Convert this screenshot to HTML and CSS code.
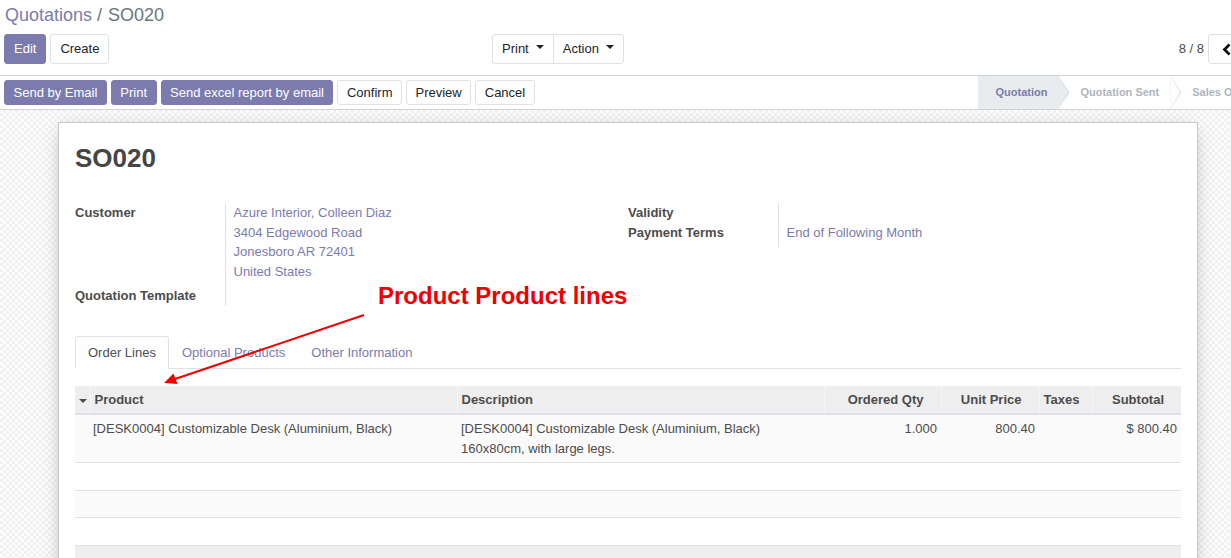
FILE: index.html
```html
<!DOCTYPE html>
<html lang="en">
<head>
<meta charset="utf-8">
<title>Quotations / SO020</title>
<link rel="stylesheet" href="styles.css">
</head>
<body>
<div class="app">
  <header class="cp">
    <ol class="breadcrumb">
      <li class="crumb-link">Quotations</li>
      <li class="crumb-sep">/</li>
      <li class="crumb-active">SO020</li>
    </ol>
    <div class="cp-row">
      <div class="cp-left">
        <button class="btn btn-primary">Edit</button>
        <button class="btn btn-secondary">Create</button>
      </div>
      <div class="cp-right">
        <div class="btn-group">
          <button class="btn btn-secondary">Print<span class="caret"></span></button>
          <button class="btn btn-secondary">Action<span class="caret"></span></button>
        </div>
        <div class="pager">
          <span class="pager-value">8 / 8</span>
          <div class="btn-group">
            <button class="btn btn-secondary pager-btn"><svg width="9" height="13" viewBox="0 0 9 13"><polyline points="7.5,1.5 2.5,6.5 7.5,11.5" fill="none" stroke="#111" stroke-width="2.8"/></svg></button>
            <button class="btn btn-secondary pager-btn"><svg width="9" height="13" viewBox="0 0 9 13"><polyline points="1.5,1.5 6.5,6.5 1.5,11.5" fill="none" stroke="#111" stroke-width="2.8"/></svg></button>
          </div>
        </div>
      </div>
    </div>
  </header>

  <div class="statusbar">
    <div class="sb-buttons">
      <button class="btn btn-sm btn-primary">Send by Email</button>
      <button class="btn btn-sm btn-primary">Print</button>
      <button class="btn btn-sm btn-primary">Send excel report by email</button>
      <button class="btn btn-sm btn-secondary">Confirm</button>
      <button class="btn btn-sm btn-secondary">Preview</button>
      <button class="btn btn-sm btn-secondary">Cancel</button>
    </div>
    <div class="sb-states">
      <span class="state active">Quotation</span>
      <span class="state">Quotation Sent</span>
      <span class="state">Sales Order</span>
    </div>
  </div>

  <main class="content">
    <div class="sheet">
      <h1 class="title">SO020</h1>

      <div class="groups">
        <table class="group">
          <tr class="pad">
            <td class="f-label">Customer</td>
            <td class="f-value">Azure Interior, Colleen Diaz<br>3404 Edgewood Road<br>Jonesboro AR 72401<br>United States</td>
          </tr>
          <tr>
            <td class="f-label">Quotation Template</td>
            <td class="f-value"></td>
          </tr>
        </table>
        <table class="group">
          <tr>
            <td class="f-label">Validity</td>
            <td class="f-value"></td>
          </tr>
          <tr class="pad">
            <td class="f-label">Payment Terms</td>
            <td class="f-value">End of Following Month</td>
          </tr>
        </table>
      </div>

      <ul class="tabs">
        <li class="tab active">Order Lines</li>
        <li class="tab">Optional Products</li>
        <li class="tab">Other Information</li>
      </ul>

      <table class="lines">
        <colgroup>
          <col style="width:15px">
          <col style="width:367px">
          <col style="width:367px">
          <col style="width:117px">
          <col style="width:98px">
          <col style="width:53px">
          <col style="width:89px">
        </colgroup>
        <thead>
          <tr>
            <th class="handle"><span class="caret"></span></th>
            <th>Product</th>
            <th>Description</th>
            <th class="num">Ordered Qty</th>
            <th class="num">Unit Price</th>
            <th>Taxes</th>
            <th class="num">Subtotal</th>
          </tr>
        </thead>
        <tbody>
          <tr class="odd">
            <td></td>
            <td class="prod">[DESK0004] Customizable Desk (Aluminium, Black)</td>
            <td>[DESK0004] Customizable Desk (Aluminium, Black)<br>160x80cm, with large legs.</td>
            <td class="num">1.000</td>
            <td class="num">800.40</td>
            <td></td>
            <td class="num">$ 800.40</td>
          </tr>
          <tr class="empty"><td colspan="7">&nbsp;</td></tr>
          <tr class="empty odd"><td colspan="7">&nbsp;</td></tr>
          <tr class="empty"><td colspan="7">&nbsp;</td></tr>
        </tbody>
        <tfoot>
          <tr><td colspan="7">&nbsp;</td></tr>
        </tfoot>
      </table>
    </div>
  </main>
</div>

<div class="annotation">Product Product lines</div>
<svg class="annotation-arrow" width="1231" height="558" viewBox="0 0 1231 558">
  <line x1="364" y1="315" x2="175" y2="379" stroke="#f00000" stroke-width="2"/>
  <polygon points="164,383 177.5,384 173.5,373.5" fill="#f00000"/>
</svg>
</body>
</html>
```

FILE: styles.css
```css
* { box-sizing: border-box; }

html, body { margin: 0; padding: 0; }

body {
  width: 1231px;
  height: 558px;
  overflow: hidden;
  position: relative;
  font-family: "Liberation Sans", Arial, sans-serif;
  font-size: 13px;
  line-height: 1.5;
  color: #4c4c4c;
  background: #fff;
}

.app { width: 1283px; }

/* ---------- control panel ---------- */
.cp {
  padding: 0 4px 11px;
  border-bottom: 1px solid #ced4da;
  background: #fff;
}

.breadcrumb {
  list-style: none;
  margin: 0;
  padding: 0 0 0 1px;
  display: flex;
  height: 30px;
  align-items: center;
  font-size: 18px;
  line-height: 30px;
}
.crumb-link { color: #7c7bad; }
.crumb-sep { color: #6c757d; padding: 0 6px 0 5px; }
.crumb-active { color: #6c757d; }

.cp-row {
  display: flex;
  margin-top: 4px;
  height: 30px;
}
.cp-left {
  display: flex;
  gap: 4px;
  width: 488px;
}
.cp-right {
  display: flex;
  flex: 1;
  align-items: center;
}
.pager {
  margin-left: auto;
  display: flex;
  align-items: center;
}
.pager-value { margin-right: 4px; color: #4c4c4c; }
.pager-btn { width: 36px; padding: 0; display: flex; align-items: center; justify-content: center; }

.btn {
  font-family: inherit;
  font-size: 13px;
  line-height: 1.5;
  height: 30px;
  padding: 0 9px;
  border: 1px solid transparent;
  border-radius: 3px;
  display: inline-flex;
  align-items: center;
  white-space: nowrap;
}
.btn-primary { background: #7c7bad; border-color: #7c7bad; color: #fff; }
.btn-secondary { background: #fff; border-color: #dee2e6; color: #212529; }
.btn-sm { height: 25px; padding: 0 8.5px; }

.btn-group { display: flex; }
.btn-group .btn + .btn { margin-left: -1px; }
.btn-group .btn:not(:first-child) { border-top-left-radius: 0; border-bottom-left-radius: 0; }
.btn-group .btn:not(:last-child) { border-top-right-radius: 0; border-bottom-right-radius: 0; }

.caret {
  display: inline-block;
  margin-left: 7px;
  width: 0;
  height: 0;
  border-top: 4px solid #212529;
  border-left: 4px solid transparent;
  border-right: 4px solid transparent;
  position: relative;
  top: -2px;
}

/* ---------- status bar ---------- */
.statusbar {
  display: flex;
  height: 34px;
  border-bottom: 1px solid #ced4da;
  background: #fff;
}
.sb-buttons {
  display: flex;
  align-items: center;
  gap: 4px;
  padding-left: 4px;
}
.sb-states {
  display: flex;
  margin-left: auto;
  padding-right: 18px;
}
.state {
  position: relative;
  display: flex;
  align-items: center;
  padding: 0 11px 0 22px;
  font-size: 11px;
  font-weight: bold;
  color: #adb5bd;
  background: #fff;
  white-space: nowrap;
}
.state:first-child { padding-left: 17px; }
.state.active { background: #e9ecef; color: #7c7bad; }
.state:not(:last-child)::before,
.state:not(:last-child)::after {
  content: "";
  position: absolute;
  top: 0;
  bottom: 0;
  z-index: 1;
  clip-path: polygon(0 0, 100% 50%, 0 100%);
}
.state:not(:last-child)::before { right: -11px; width: 11px; background: #ced4da; }
.state:not(:last-child)::after { right: -10px; width: 10px; background: inherit; }

/* ---------- content ---------- */
.content {
  width: 1256px;
  height: 449px;
  padding-top: 12px;
  background-color: #fbfbfb;
  background-image: repeating-conic-gradient(#f1f1f1 0 25%, #fcfcfc 0 50%);
  background-size: 6px 6px;
}
.sheet {
  width: 1140px;
  margin: 0 auto;
  min-height: 500px;
  background: #fff;
  border: 1px solid #c8c8d3;
  box-shadow: 0 4px 18px -5px rgba(0, 0, 0, 0.32);
  padding: 20px 16px 0;
}

.title {
  font-size: 26px;
  font-weight: bold;
  line-height: 31px;
  margin: 0 0 29px;
  color: #454545;
}

.groups {
  display: grid;
  grid-template-columns: 1fr 1fr;
  align-items: start;
}
.group { border-collapse: collapse; }
.group td { padding: 0; vertical-align: top; }
.group .f-label {
  width: 150px;
  border-right: 1px solid #dee2e6;
  font-weight: bold;
  white-space: nowrap;
}
.group .f-value { padding-left: 8px; color: #7c7bad; }
.group .pad td { padding-bottom: 5px; }

.tabs {
  display: flex;
  list-style: none;
  margin: 30px 0 0;
  padding: 0;
  border-bottom: 1px solid #dee2e6;
}
.tab {
  padding: 6px 12px;
  border: 1px solid transparent;
  border-bottom: 0;
  margin-bottom: -1px;
  border-radius: 3px 3px 0 0;
  color: #7c7bad;
}
.tab.active {
  border-color: #dee2e6;
  border-bottom: 1px solid #fff;
  background: #fff;
  color: #495057;
}

.lines {
  width: 100%;
  margin-top: 17px;
  table-layout: fixed;
  border-collapse: collapse;
}
.lines th {
  background: #eeeeee;
  font-weight: bold;
  text-align: left;
  padding: 4px;
  line-height: 19px;
  border-left: 1px solid #f6f6f6;
  border-bottom: 2px solid #dee2e6;
  white-space: nowrap;
}
.lines th:first-child { border-left: 0; }
.lines th.num { text-align: right; padding-right: 17px; }
.lines th.handle { padding: 4px 0 4px 4px; }
.lines th.handle .caret { margin: 0; border-top-color: #4c4c4c; top: -1px; }
.lines td {
  padding: 4px;
  vertical-align: top;
  border-bottom: 1px solid #dee2e6;
}
.lines td.prod { padding-left: 3px; }
.lines td.num { text-align: right; }
.lines tbody tr { background: #fff; }
.lines tbody tr.odd { background: #fafafa; }
.lines tr.empty td { line-height: 18.6px; }
.lines tfoot td {
  background: #eeeeee;
  border-top: 1px solid #dee2e6;
  border-bottom: 0;
}

/* ---------- annotation overlay ---------- */
.annotation {
  position: absolute;
  left: 378px;
  top: 282px;
  font-family: "Liberation Sans", Arial, sans-serif;
  font-size: 24px;
  line-height: 28px;
  font-weight: bold;
  color: #f00000;
  white-space: nowrap;
}
.annotation-arrow {
  position: absolute;
  left: 0;
  top: 0;
  pointer-events: none;
}
```
